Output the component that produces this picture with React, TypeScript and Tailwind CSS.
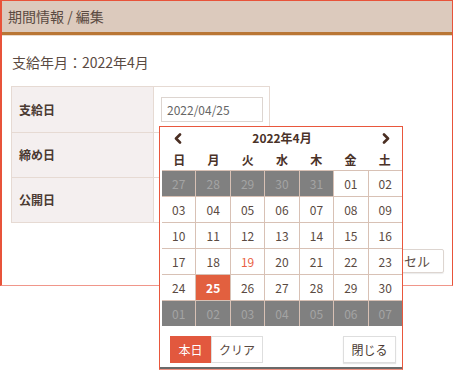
import React from "react";

const font = { fontFamily: '"Noto Sans CJK JP", "Noto Sans", sans-serif' };

type Cell = { d: string; muted?: boolean; red?: boolean; sel?: boolean };

const rows: Cell[][] = [
  [
    { d: "27", muted: true },
    { d: "28", muted: true },
    { d: "29", muted: true },
    { d: "30", muted: true },
    { d: "31", muted: true },
    { d: "01" },
    { d: "02" },
  ],
  ["03", "04", "05", "06", "07", "08", "09"].map((d) => ({ d })),
  ["10", "11", "12", "13", "14", "15", "16"].map((d) => ({ d })),
  [
    { d: "17" },
    { d: "18" },
    { d: "19", red: true },
    { d: "20" },
    { d: "21" },
    { d: "22" },
    { d: "23" },
  ],
  [
    { d: "24" },
    { d: "25", sel: true },
    { d: "26" },
    { d: "27" },
    { d: "28" },
    { d: "29" },
    { d: "30" },
  ],
  ["01", "02", "03", "04", "05", "06", "07"].map((d) => ({ d, muted: true })),
];

const days = ["日", "月", "火", "水", "木", "金", "土"];

function Chevron({ dir }: { dir: "l" | "r" }) {
  return (
    <svg width="8" height="11" viewBox="0 0 8 11">
      <path
        d={dir === "l" ? "M6 1.5 L2 5.5 L6 9.5" : "M2 1.5 L6 5.5 L2 9.5"}
        fill="none"
        stroke="#4a2e22"
        strokeWidth="2.6"
        strokeLinecap="round"
        strokeLinejoin="round"
      />
    </svg>
  );
}

export default function App() {
  return (
    <div className="relative w-[454px] h-[372px] bg-white text-[#5a4a42]" style={font}>
      {/* main panel */}
      <div className="w-[453px] h-[286px] border border-[#e8533a] border-l-2 border-b-[#f0968a] bg-white">
        <div className="h-[34px] bg-[#dccabd] border-b-[3px] border-[#b97635] flex items-center pl-[6px] text-[14px] text-[#5a4a42]">
          期間情報 / 編集
        </div>
        <div className="h-px bg-[#eadacd]" />
        <div className="mt-[16px] ml-[10px] text-[14px] leading-[20px] text-[#5a4a42]">
          支給年月：2022年4月
        </div>
        <div className="mt-[14px] ml-[9px] w-[259px] border border-[#e6dad3]">
          {[
            { label: "支給日", input: true },
            { label: "締め日" },
            { label: "公開日" },
          ].map((r, i) => (
            <div
              key={r.label}
              className={`flex h-[45px] ${i > 0 ? "border-t border-[#e6dad3]" : ""}`}
            >
              <div className="w-[142px] bg-[#f4efef] border-r border-[#e6dad3] flex items-center pl-[7px] text-[12px] font-bold text-[#4a3a32]">
                {r.label}
              </div>
              <div className="flex-1 flex items-center pl-[7px]">
                {r.input && (
                  <div className="w-[102px] h-[25px] border border-[#ddd5d0] flex items-center pl-[5px] text-[12px] text-[#666]">
                    2022/04/25
                  </div>
                )}
              </div>
            </div>
          ))}
        </div>
        <div className="mt-[26px] flex justify-end pr-[8px]">
          <div className="w-[93px] h-[24px] border border-[#ddd5d0] rounded-[2px] flex items-center justify-center text-[13px] text-[#5a4a42] shadow-[0_1px_1px_rgba(0,0,0,0.08)]">
            キャンセル
          </div>
        </div>
      </div>

      {/* calendar popup */}
      <div className="absolute left-[159px] top-[126px] w-[244px] h-[244px] border border-[#e9573d] border-b-[#f09080] bg-white flex flex-col">
        <div className="flex items-center justify-between h-[22px] pl-[14px] pr-[12px]">
          <Chevron dir="l" />
          <span className="text-[12px] font-bold text-[#4a3228]">2022年4月</span>
          <Chevron dir="r" />
        </div>
        <div className="grid grid-cols-7 h-[21px] items-center pl-[2px] text-center text-[12px] font-bold text-[#4a3228]">
          {days.map((d) => (
            <div key={d}>{d}</div>
          ))}
        </div>
        <div className="pl-[2px] bg-white">
          <div className="grid grid-cols-7 gap-px bg-[#d8c1b5] pt-px">
            {rows.flat().map((c, i) => (
              <div
                key={i}
                className={`h-[25px] flex items-center justify-center text-[12px] ${
                  c.sel
                    ? "bg-[#e2603f] text-white font-bold"
                    : c.muted
                    ? "bg-[#808080] text-[#a4a4a4]"
                    : c.red
                    ? "bg-white text-[#ea5f43]"
                    : "bg-white text-[#5a4a42]"
                }`}
              >
                {c.d}
              </div>
            ))}
          </div>
        </div>
        <div className="flex-1 flex items-start justify-between pt-[10px] pl-[10px] pr-[6px] border-b-2 border-[#6a6a6a]">
          <div className="flex">
            <div className="w-[41px] h-[27px] bg-[#e2583e] text-white text-[12px] flex items-center justify-center">
              本日
            </div>
            <div className="w-[52px] h-[27px] border border-[#dedede] text-[#5a4a42] text-[12px] flex items-center justify-center">
              クリア
            </div>
          </div>
          <div className="w-[53px] h-[27px] border border-[#dedede] text-[#4a3a32] text-[12px] flex items-center justify-center shadow-[0_1px_1px_rgba(0,0,0,0.1)]">
            閉じる
          </div>
        </div>
      </div>
    </div>
  );
}
